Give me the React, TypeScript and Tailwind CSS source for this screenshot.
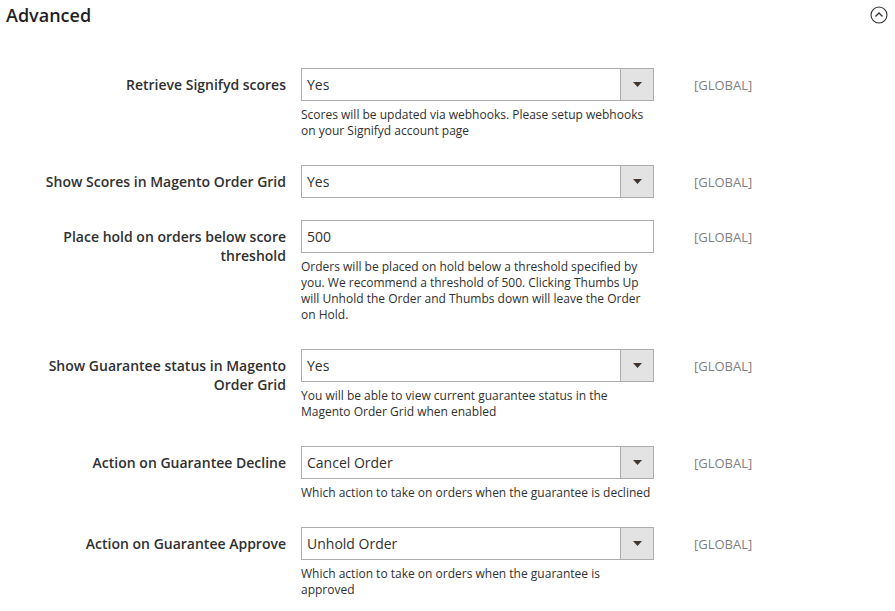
type Row = {
  label: string;
  value: string;
  kind: 'select' | 'text';
  note?: string;
};

const rows: Row[] = [
  {
    label: 'Retrieve Signifyd scores',
    value: 'Yes',
    kind: 'select',
    note: 'Scores will be updated via webhooks. Please setup webhooks on your Signifyd account page',
  },
  { label: 'Show Scores in Magento Order Grid', value: 'Yes', kind: 'select' },
  {
    label: 'Place hold on orders below score threshold',
    value: '500',
    kind: 'text',
    note: 'Orders will be placed on hold below a threshold specified by you. We recommend a threshold of 500. Clicking Thumbs Up will Unhold the Order and Thumbs down will leave the Order on Hold.',
  },
  {
    label: 'Show Guarantee status in Magento Order Grid',
    value: 'Yes',
    kind: 'select',
    note: 'You will be able to view current guarantee status in the Magento Order Grid when enabled',
  },
  {
    label: 'Action on Guarantee Decline',
    value: 'Cancel Order',
    kind: 'select',
    note: 'Which action to take on orders when the guarantee is declined',
  },
  {
    label: 'Action on Guarantee Approve',
    value: 'Unhold Order',
    kind: 'select',
    note: 'Which action to take on orders when the guarantee is approved',
  },
];

const Field = ({ row }: { row: Row }) => (
  <div className="flex h-[33px] border border-[#adadad] bg-white">
    <div className="flex-1 flex items-center pl-[5px] text-[14px] text-[#303030]">{row.value}</div>
    {row.kind === 'select' && (
      <div className="w-[33px] flex items-center justify-center bg-[#e3e3e3] border-l border-[#adadad]">
        <svg width="9" height="5" viewBox="0 0 9 5">
          <polygon points="0,0 9,0 4.5,5" fill="#41362f" />
        </svg>
      </div>
    )}
  </div>
);

export default function App() {
  return (
    <div className="min-h-screen bg-white text-[#303030]" style={{ fontFamily: '"Open Sans", "Liberation Sans", sans-serif' }}>
      <div className="flex h-[30px] items-center justify-between pl-[6px] pr-[7px]">
        <h2 className="text-[18px] font-semibold leading-[26px] text-[#1f1f1f]">Advanced</h2>
        <svg width="18" height="18" viewBox="0 0 18 18" fill="none" stroke="#303030" strokeWidth="1.1">
          <circle cx="9" cy="9" r="8" />
          <polyline points="5.5,10.5 9,7 12.5,10.5" strokeWidth="1.3" />
        </svg>
      </div>

      <div className="mt-[38px] flex flex-col gap-[22px]">
        {rows.map((row) => (
          <div key={row.label} className="flex items-start">
            <div className="w-[287px] pl-[20px] pr-[1px] pt-[7px] text-right text-[14px] font-semibold leading-[19px] text-[#303030]">
              {row.label}
            </div>
            <div className="ml-[14px] w-[353px]">
              <Field row={row} />
              {row.note && (
                <p className="mt-[6px] mb-[4px] pr-[3px] text-[12px] leading-[16px] text-[#303030]">{row.note}</p>
              )}
            </div>
            <div className="ml-[40px] pt-[9px] text-[13px] leading-[17px] text-[#808080]">[GLOBAL]</div>
          </div>
        ))}
      </div>
    </div>
  );
}
